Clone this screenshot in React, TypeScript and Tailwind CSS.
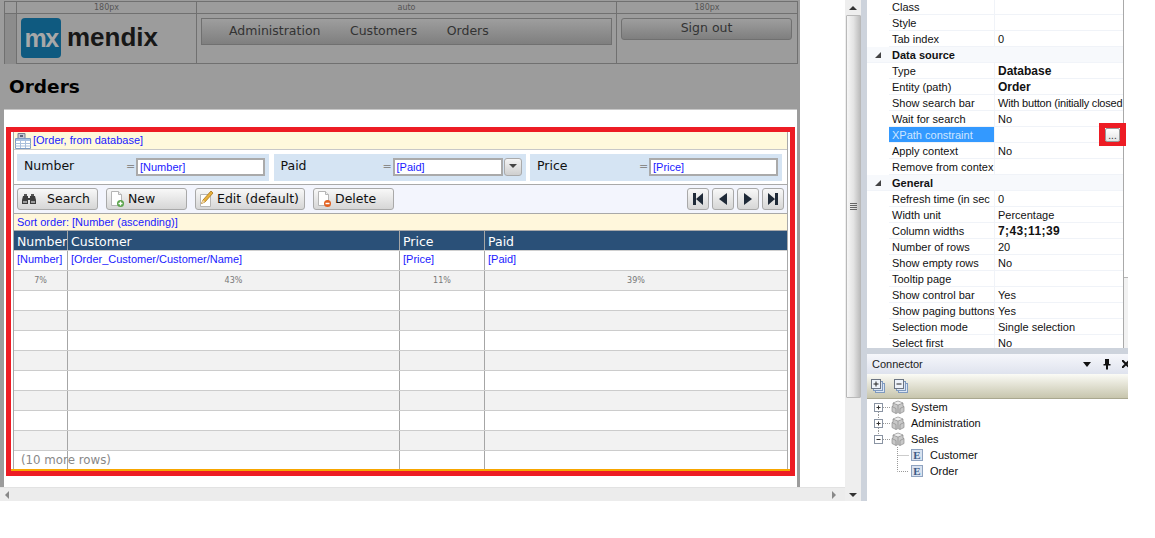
/**
 * Mendix Modeler page editor: dimmed layout header, data grid with red highlight,
 * vertical scroll bar, properties panel and connector tree.
 */

const DEJAVU = "font-['DejaVu_Sans',sans-serif]"

const PROPERTY_ROWS: { name: string; value?: string; kind?: 'category' | 'bold' | 'selected' | 'spaced' | 'tight' }[] = [
  { name: 'Class' },
  { name: 'Style' },
  { name: 'Tab index', value: '0' },
  { name: 'Data source', kind: 'category' },
  { name: 'Type', value: 'Database', kind: 'bold' },
  { name: 'Entity (path)', value: 'Order', kind: 'bold' },
  { name: 'Show search bar', value: 'With button (initially closed', kind: 'tight' },
  { name: 'Wait for search', value: 'No' },
  { name: 'XPath constraint', kind: 'selected' },
  { name: 'Apply context', value: 'No' },
  { name: 'Remove from contex' },
  { name: 'General', kind: 'category' },
  { name: 'Refresh time (in sec', value: '0' },
  { name: 'Width unit', value: 'Percentage' },
  { name: 'Column widths', value: '7;43;11;39', kind: 'spaced' },
  { name: 'Number of rows', value: '20' },
  { name: 'Show empty rows', value: 'No' },
  { name: 'Tooltip page' },
  { name: 'Show control bar', value: 'Yes' },
  { name: 'Show paging buttons', value: 'Yes' },
  { name: 'Selection mode', value: 'Single selection' },
  { name: 'Select first', value: 'No' },
]

const COLS = 'grid grid-cols-[54px_332px_85px_302px]'
const CELL_LINE = 'border-r border-[#a6a6a6] last:border-r-0'

function Triangle({ dir, className = '' }: { dir: 'up' | 'down' | 'left' | 'right'; className?: string }) {
  const points = {
    up: '0,6 4,2 8,6',
    down: '0,1 8,1 4,5',
    left: '5,0 5,8 1,4',
    right: '1,0 1,8 5,4',
  }[dir]
  return (
    <svg width="8" height="8" viewBox="0 0 8 8" className={className}>
      <polygon points={points} fill="currentColor" />
    </svg>
  )
}

function Doc({ badge }: { badge: 'add' | 'remove' }) {
  return (
    <svg width="15" height="18" viewBox="0 0 15 18">
      <path d="M1.5 1.5h7l3 3v11h-10z" fill="#fff" stroke="#b5b5b5" />
      <path d="M8.5 1.5v3h3" fill="#eee" stroke="#b5b5b5" />
      <circle cx="10.5" cy="13.5" r="3.5" fill={badge === 'add' ? '#5aa34a' : '#e2601f'} />
      {badge === 'add' ? (
        <path d="M10.5 11.5v4M8.5 13.5h4" stroke="#fff" strokeWidth="1.3" />
      ) : (
        <path d="M8.5 13.5h4" stroke="#fff" strokeWidth="1.5" />
      )}
    </svg>
  )
}

function Pencil() {
  return (
    <svg width="15" height="18" viewBox="0 0 15 18">
      <path d="M1.5 4.5h10v12h-10z" fill="#fff" stroke="#b5b5b5" />
      <path d="M12 1l2 2-8 9-3.5 1.5L4 10z" fill="#e8b23c" stroke="#a8741c" strokeWidth="0.8" />
      <path d="M2.5 13.5L4 10l2 2z" fill="#f3dcb0" />
    </svg>
  )
}

function Binoculars() {
  return (
    <svg width="14" height="12" viewBox="0 0 14 12">
      <path d="M2 1h3v2H2zM9 1h3v2H9z" fill="#555" />
      <path d="M1 3h5v2h2V3h5l1 4v4H8V7H6v4H0V7z" fill="#3d3d3d" />
      <path d="M1 8h4v2H1zM9 8h4v2H9z" fill="#9a9a9a" />
    </svg>
  )
}

function GridIcon() {
  return (
    <svg width="16" height="16" viewBox="0 0 16 16" className="shrink-0">
      <path d="M3 0.5h7v5H3z" fill="#c9c9d6" stroke="#77808f" />
      <path d="M5 2h3v2H5z" fill="#5b6478" />
      <path d="M0.5 5.5h15v10H0.5z" fill="#fff" stroke="#7d9cc4" />
      <path d="M1 6h14v2H1z" fill="#a9c2e2" />
      <path d="M0.5 10.5h15M0.5 13h15M5.5 6v9M10.5 6v9" stroke="#a9bfdc" />
    </svg>
  )
}

function Cube() {
  return (
    <svg width="14" height="14" viewBox="0 0 14 14" className="shrink-0">
      <path d="M7 1l5 2v3l1 .5v5L9 13.5 7 12.5 5 13.5 1 11.5v-5L2 6V3z" fill="#c8c8c8" stroke="#8c8c8c" strokeWidth="0.7" />
      <path d="M7 5v7M2 3l5 2 5-2M1 6.5l4 2v5M13 6.5l-4 2v5" fill="none" stroke="#8c8c8c" strokeWidth="0.7" />
      <path d="M3 3l4-1.4L11 3 7 4.4z" fill="#efefef" />
    </svg>
  )
}

function Expander({ open, last, first }: { open: boolean; last?: boolean; first?: boolean }) {
  return (
    <svg width="20" height="16" viewBox="0 0 20 16" className="shrink-0">
      {!first && <path d="M7.5 0v3" stroke="#999" strokeDasharray="1 1" />}
      {!last && <path d="M7.5 13v3" stroke="#999" strokeDasharray="1 1" />}
      <path d="M12 8.5h7" stroke="#999" strokeDasharray="1 1" />
      <rect x="3.5" y="4.5" width="8" height="8" fill="#fff" stroke="#8a94a3" />
      <path d="M5.5 8.5h4" stroke="#333" />
      {!open && <path d="M7.5 6.5v4" stroke="#333" />}
    </svg>
  )
}

function TreeModule({ label, open, first, last }: { label: string; open: boolean; first?: boolean; last?: boolean }) {
  return (
    <div className="flex h-4 items-center pl-[4px]">
      <Expander open={open} first={first} last={last} />
      <Cube />
      <span className="ml-[6px]">{label}</span>
    </div>
  )
}

function TreeEntity({ label, last }: { label: string; last?: boolean }) {
  return (
    <div className="flex h-4 items-center pl-[4px]">
      <svg width="40" height="16" viewBox="0 0 40 16" className="shrink-0">
        <path d={last ? 'M26.5 0v8.5H38' : 'M26.5 0v16M26.5 8.5H38'} fill="none" stroke="#999" strokeDasharray="1 1" />
      </svg>
      <div className="flex h-[12px] w-[12px] items-center justify-center border border-[#8fa3c0] bg-[#d9e2f0] font-['Liberation_Serif',serif] text-[11px] leading-none font-bold text-[#3c5a85]">
        E
      </div>
      <span className="ml-[7px]">{label}</span>
    </div>
  )
}

function SearchCell({ label, value, dropdown }: { label: string; value: string; dropdown?: boolean }) {
  return (
    <div className="flex h-[27px] w-[252px] items-center bg-[#d5e4f3] pr-[4px] pl-[7px]">
      <span className={`${DEJAVU} -mt-[2px] w-[102px] text-[12.5px] text-[#111]`}>{label}</span>
      <span className={`${DEJAVU} w-[10px] pt-[1px] text-[11px] text-[#8a8a8a]`}>=</span>
      <div className="flex h-[18px] flex-1 items-center border-2 border-[#aaaaaa] bg-white pl-[2px] text-[11px] text-[#1a1aff]">
        {value}
      </div>
      {dropdown && (
        <div className="ml-[1px] flex h-[18px] w-[18px] items-center justify-center rounded-[3px] border border-[#aaa] bg-gradient-to-b from-[#f4f4f4] to-[#cfcfcf] text-[#444]">
          <Triangle dir="down" />
        </div>
      )}
    </div>
  )
}

function ToolButton({ icon, label, width, gap }: { icon: React.ReactNode; label: string; width: string; gap: string }) {
  return (
    <div className={`flex h-[22px] ${width} items-center rounded-[3px] border border-[#a9a9a9] bg-gradient-to-b from-[#f8f8f8] to-[#d6d6d6] pl-[3px] text-[12.5px] text-[#111] ${DEJAVU}`}>
      <span className="flex w-[15px] shrink-0 items-center justify-center">{icon}</span>
      <span className={gap}>{label}</span>
    </div>
  )
}

function PageButton({ children }: { children: React.ReactNode }) {
  return (
    <div className="flex h-[22px] w-[22px] items-center justify-center rounded-[3px] border border-[#a9a9a9] bg-gradient-to-b from-[#f8f8f8] to-[#d6d6d6]">
      <svg width="14" height="14" viewBox="0 0 14 14" fill="#1f2a38">
        {children}
      </svg>
    </div>
  )
}

function DataGrid() {
  return (
    <div className="flex h-[339px] flex-col border-b-2 border-[#f7a600] bg-white px-[2px]">
      <div className="flex h-[337px] flex-col border-x border-[#a9a9a9] text-[11px]">
        <div className="flex h-[18px] items-center gap-[2px] border-b border-[#c8c8c8] bg-[#fff9dc] pl-[1px] text-[#1a1aff]">
          <GridIcon />
          <span className="-mt-[1px]">[Order, from database]</span>
        </div>
        <div className="flex h-[35px] items-center gap-[4.5px] border-b border-[#a9a9a9] pl-[3px]">
          <SearchCell label="Number" value="[Number]" />
          <SearchCell label="Paid" value="[Paid]" dropdown />
          <SearchCell label="Price" value="[Price]" />
        </div>
        <div className="flex h-[29px] items-center justify-between border-b border-[#a9a9a9] bg-[#f3f5fd] pr-[3px] pl-[3px]">
          <div className="flex gap-[8px]">
            <ToolButton icon={<Binoculars />} label="Search" width="w-[81px]" gap="ml-[11px]" />
            <ToolButton icon={<Doc badge="add" />} label="New" width="w-[81px]" gap="ml-[3px]" />
            <ToolButton icon={<Pencil />} label="Edit (default)" width="w-[110px]" gap="ml-[3px]" />
            <ToolButton icon={<Doc badge="remove" />} label="Delete" width="w-[81px]" gap="ml-[3px]" />
          </div>
          <div className="flex gap-[3px]">
            <PageButton>
              <path d="M2 1h3v12H2zM12 1v12L5 7z" />
            </PageButton>
            <PageButton>
              <path d="M11 1v12L3 7z" />
            </PageButton>
            <PageButton>
              <path d="M3 1v12l8-6z" />
            </PageButton>
            <PageButton>
              <path d="M2 1v12l7-6zM9 1h3v12H9z" />
            </PageButton>
          </div>
        </div>
        <div className="flex h-[17px] items-center border-b border-[#a9a9a9] bg-[#fff7dc] pt-[1px] pl-[3px] text-[#1a1aff]">
          Sort order: [Number (ascending)]
        </div>
        <div className={`${COLS} ${DEJAVU} h-[20px] border-b border-[#d0d0d0] bg-[#2a5078] text-[12.5px] text-white`}>
          {['Number', 'Customer', 'Price', 'Paid'].map((h) => (
            <div key={h} className={`${CELL_LINE} overflow-hidden pl-[3px] leading-[21px]`}>
              {h}
            </div>
          ))}
        </div>
        <div className={`${COLS} h-[20px] border-b border-[#cccccc] text-[#1a1aff]`}>
          {['[Number]', '[Order_Customer/Customer/Name]', '[Price]', '[Paid]'].map((c) => (
            <div key={c} className={`${CELL_LINE} pl-[3px] leading-[16px]`}>
              {c}
            </div>
          ))}
        </div>
        <div className={`${COLS} ${DEJAVU} h-[20px] border-b border-[#cccccc] bg-[#f2f2f2] text-[8px] text-[#777]`}>
          {['7%', '43%', '11%', '39%'].map((p) => (
            <div key={p} className={`${CELL_LINE} text-center leading-[19px]`}>
              {p}
            </div>
          ))}
        </div>
        {[0, 1, 2, 3, 4, 5, 6, 7].map((i) => (
          <div key={i} className={`${COLS} h-[20px] border-b border-[#cccccc] ${i % 2 === 1 ? 'bg-[#f2f2f2]' : 'bg-white'}`}>
            <div className={CELL_LINE} />
            <div className={CELL_LINE} />
            <div className={CELL_LINE} />
            <div className={CELL_LINE} />
          </div>
        ))}
        <div className={`${COLS} h-[18px]`}>
          <div className={`${CELL_LINE} ${DEJAVU} pl-[7px] text-[11.8px] leading-[18px] whitespace-nowrap text-[#888]`}>
            (10 more rows)
          </div>
          <div className={CELL_LINE} />
          <div className={CELL_LINE} />
          <div className={CELL_LINE} />
        </div>
      </div>
    </div>
  )
}

function LayoutHeader() {
  return (
    <div className={`${DEJAVU} ml-[4px] grid h-[63px] w-[794px] grid-cols-[12px_180px_420px_181px] grid-rows-[12px_50px] border-y border-l border-[#707070] text-[#333]`}>
      <div className="border-r border-b border-[#707070]" />
      <div className="border-r border-b border-[#707070] text-center text-[8px] leading-[11px] text-[#555]">180px</div>
      <div className="border-r border-b border-[#707070] text-center text-[8px] leading-[11px] text-[#555]">auto</div>
      <div className="border-r border-b border-[#707070] text-center text-[8px] leading-[11px] text-[#555]">180px</div>
      <div className="border-r border-[#707070] bg-[#8c8c8c]" />
      <div className="flex items-start gap-[6px] border-r border-[#707070] pt-[4px] pl-[4px] font-['Liberation_Sans',sans-serif]">
        <div className="flex h-[40px] w-[40px] items-center justify-center rounded-[4px] bg-[#0f5a80] text-[25px] leading-none font-bold tracking-[-1.5px] text-[#a8a8a8]">
          mx
        </div>
        <span className="mt-[1px] text-[26px] leading-[36px] font-bold text-[#171717]">mendix</span>
      </div>
      <div className="border-r border-[#707070] pt-[4px] pl-[4px]">
        <div className="flex h-[27px] w-[411px] items-center gap-[29.5px] border border-[#707070] bg-gradient-to-b from-[#9e9e9e] to-[#7f7f7f] pb-[1px] pl-[27px] text-[12.5px]">
          <span>Administration</span>
          <span>Customers</span>
          <span>Orders</span>
        </div>
      </div>
      <div className="border-r border-[#707070] pt-[4px] pl-[4px]">
        <div className="flex h-[22px] w-[171px] items-center justify-center rounded-[3px] border border-[#707070] bg-gradient-to-b from-[#9e9e9e] to-[#7f7f7f] pb-[1px] text-[12.5px]">
          Sign out
        </div>
      </div>
    </div>
  )
}

function Editor() {
  return (
    <div className="flex h-[501px] w-[845px] flex-col bg-white">
      <div className="flex h-[487px] w-[800px] flex-col bg-[#9c9c9c] pt-[1px]">
        <LayoutHeader />
        <div className="flex h-[45px] items-center pl-[9px]">
          <h1 className={`${DEJAVU} text-[18.5px] font-bold text-black`}>Orders</h1>
        </div>
        <div className="ml-[4px] h-[378px] w-[793px] border-t border-[#c8c8c8] bg-white pt-[17px] pl-[2px]">
          <div className="w-[789px] border-[5px] border-[#ed1c24]">
            <DataGrid />
          </div>
        </div>
      </div>
      <div className="flex h-[14px] items-center justify-between border-t border-[#e2e2e2] bg-[#ececec] pr-[6px] pl-[4px] text-[#888]">
        <Triangle dir="left" />
        <Triangle dir="right" />
      </div>
    </div>
  )
}

function VerticalScroll() {
  return (
    <div className="flex h-[501px] w-[16px] flex-col items-center bg-[#eeeeee] text-[#333]">
      <div className="flex h-[15px] items-center justify-center">
        <Triangle dir="up" />
      </div>
      <div className="flex h-[383px] w-[15px] items-center justify-center rounded-[1px] border border-[#b9b9b9] bg-gradient-to-r from-[#f6f6f6] via-[#e4e4e4] to-[#bdbdbd]">
        <div className="flex w-[7px] flex-col gap-[1px]">
          <div className="h-px bg-[#666]" />
          <div className="h-px bg-[#666]" />
          <div className="h-px bg-[#666]" />
          <div className="h-px bg-[#666]" />
        </div>
      </div>
      <div className="flex flex-1 items-end justify-center pb-[1px]">
        <Triangle dir="down" />
      </div>
    </div>
  )
}

function PropertyGrid() {
  return (
    <div className="relative flex h-[348px]">
      <div className="-mt-[1px] w-[257px] overflow-hidden border-r border-[#a9a9a9] bg-white">
        {PROPERTY_ROWS.map((row) =>
          row.kind === 'category' ? (
            <div key={row.name} className="flex h-4 items-center border-b border-[#f1f4f9] bg-[#f7f9fc] pt-[1px] font-bold">
              <svg width="8" height="8" viewBox="0 0 8 8" className="ml-[7px]">
                <polygon points="1,7 7,7 7,1" fill="#444" />
              </svg>
              <span className="ml-[10px]">{row.name}</span>
            </div>
          ) : (
            <div key={row.name} className="flex h-4 pl-[22px]">
              <div
                className={`w-[106px] shrink-0 overflow-hidden border-r border-b border-[#f0f3f8] pl-[3px] leading-[17px] whitespace-nowrap ${
                  row.kind === 'selected' ? 'bg-[#3399ff] text-[#cfe6ff]' : ''
                }`}
              >
                {row.name}
              </div>
              <div
                className={`flex-1 overflow-hidden border-b border-[#f0f3f8] pl-[3px] leading-[17px] whitespace-nowrap ${
                  row.kind === 'bold' || row.kind === 'spaced' ? 'text-[12px] font-bold' : ''
                } ${row.kind === 'spaced' ? 'tracking-[0.4px]' : ''} ${row.kind === 'tight' ? 'tracking-[-0.2px]' : ''}`}
              >
                {row.value}
              </div>
            </div>
          ),
        )}
      </div>
      <div className="flex w-[4px] flex-col">
        <div className="h-[277px] bg-white" />
        <div className="flex-1 border-t border-[#b5b5b5] bg-[#f2f2f2]" />
      </div>
      {/* Red highlight around the ellipsis button */}
      <div className="absolute top-[123px] left-[232px] flex h-[23px] w-[27px] items-center justify-center border-x-[6px] border-y-[5px] border-[#ed1c24] bg-white">
        <div className="flex h-[14px] w-[15px] shrink-0 items-end justify-center rounded-[2px] border border-[#9a9a9a] bg-gradient-to-b from-white to-[#e4e4e4] text-[10px] leading-[11px] text-[#333]">
          ...
        </div>
      </div>
    </div>
  )
}

function Connector() {
  return (
    <>
      <div className="flex h-[20px] items-center justify-between overflow-hidden bg-gradient-to-b from-[#f6f7fb] to-[#dfe3ee] pl-[5px] text-[#222]">
        <span>Connector</span>
        <div className="-mr-[2px] flex items-center gap-[10px]">
          <svg width="10" height="8" viewBox="0 0 10 8">
            <polygon points="1,2 9,2 5,7" fill="#111" />
          </svg>
          <svg width="10" height="12" viewBox="0 0 10 12">
            <path d="M3 1h4v5h1.5v1.5h-2.5v4h-2v-4H1.500V6H3z" fill="#111" />
          </svg>
          <svg width="8" height="8" viewBox="0 0 8 8">
            <path d="M0 0l8 8M8 0l-8 8" stroke="#111" strokeWidth="2" />
          </svg>
        </div>
      </div>
      <div className="flex h-[25px] items-center gap-[9px] border-b border-[#a9a78f] bg-gradient-to-b from-[#fbfbf6] to-[#c7c5ad] pl-[4px]">
        {[true, false].map((plus) => (
          <svg key={String(plus)} width="14" height="14" viewBox="0 0 14 14">
            <rect x="4.500" y="4.500" width="9" height="9" fill="#dce6f4" stroke="#7f9abf" />
            <rect x="2.500" y="2.500" width="9" height="9" fill="#dce6f4" stroke="#7f9abf" />
            <rect x="0.500" y="0.500" width="9" height="9" fill="#eef3fa" stroke="#6b7482" />
            <path d="M2.500 5h5" stroke="#222" />
            {plus && <path d="M5 2.500v5" stroke="#222" />}
          </svg>
        ))}
      </div>
      <div className="flex-1 bg-white text-[#111]">
        <TreeModule label="System" open={false} first />
        <TreeModule label="Administration" open={false} />
        <TreeModule label="Sales" open last />
        <TreeEntity label="Customer" />
        <TreeEntity label="Order" last />
      </div>
    </>
  )
}

export default function App() {
  return (
    <div className="h-[538px] w-[1155px] overflow-hidden bg-white font-['Liberation_Sans',sans-serif] text-[11px] text-[#111]">
      <div className="flex h-[501px] w-[1128px]">
        <Editor />
        <VerticalScroll />
        <div className="w-[6px] bg-[#cdd3dc]" />
        <div className="flex w-[261px] flex-col">
          <PropertyGrid />
          <div className="h-[6px] shrink-0 bg-[#cdd3dc]" />
          <Connector />
        </div>
      </div>
    </div>
  )
}
